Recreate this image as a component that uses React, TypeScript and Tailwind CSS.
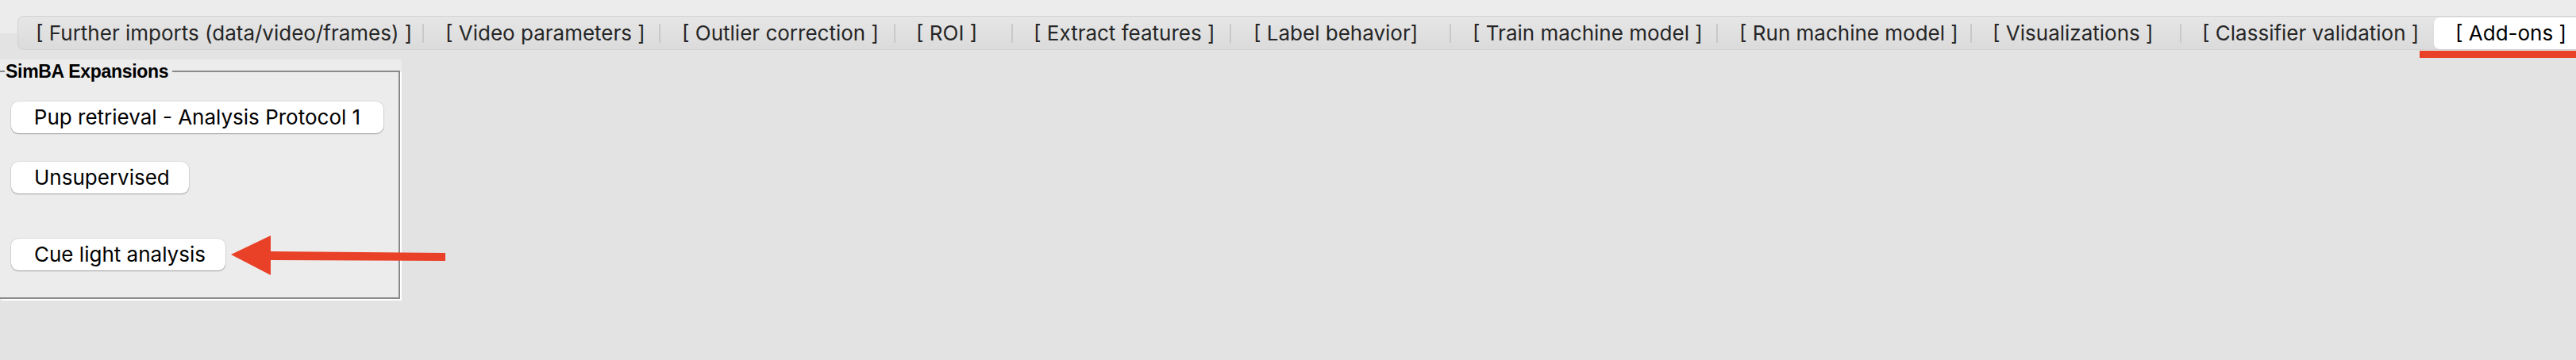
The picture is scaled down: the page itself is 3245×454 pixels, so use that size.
import React from "react";

const tabs: { label: string; cls: string }[] = [
  { label: "[ Further imports (data/video/frames) ]", cls: "w-[509px] pl-[22px]" },
  { label: "[ Video parameters ]", cls: "w-[296px] pl-[27px]" },
  { label: "[ Outlier correction ]", cls: "w-[294px] pl-[27px]" },
  { label: "[ ROI ]", cls: "w-[146px] pl-[26px]" },
  { label: "[ Extract features ]", cls: "w-[273px] pl-[26px]" },
  { label: "[ Label behavior]", cls: "w-[275px] pl-[28px]" },
  { label: "[ Train machine model ]", cls: "w-[334px] pl-[27px]" },
  { label: "[ Run machine model ]", cls: "w-[318px] pl-[27px]" },
  { label: "[ Visualizations ]", cls: "w-[262px] pl-[26px]" },
  { label: "[ Classifier validation ]", cls: "w-[318px] pl-[26px]" },
];

function MacButton({ label, cls }: { label: string; cls: string }) {
  return (
    <button
      className={
        "h-[40px] rounded-[9px] bg-white text-black text-[26px] leading-none flex items-center justify-center whitespace-nowrap shadow-[0_1px_1.5px_rgba(0,0,0,0.28),0_0_0_0.5px_rgba(0,0,0,0.12)] " +
        cls
      }
    >
      {label}
    </button>
  );
}

export default function App() {
  return (
    <div className="relative w-[3245px] h-[454px] overflow-hidden bg-[linear-gradient(to_bottom,#ececec_0px,#ececec_42px,#e3e3e3_42px,#e3e3e3_100%)] font-['Inter','Liberation_Sans',sans-serif]">
      {/* Tab bar */}
      <div className="pt-[20px] pl-[22px]">
        <div className="flex items-center w-[3300px] h-[43px] rounded-[8px] border border-[#d2d2d2] bg-[linear-gradient(to_bottom,#e6e6e6,#dbdbdb)] text-[26px] text-[#262626] leading-none">
          {tabs.map((t, i) => (
            <React.Fragment key={t.label}>
              <div className={"h-full flex items-center whitespace-nowrap shrink-0 " + t.cls}>{t.label}</div>
              {i < tabs.length - 1 && <div className="w-[2px] h-[24px] bg-[#c9c9c9] shrink-0" />}
            </React.Fragment>
          ))}
          <div className="h-[40px] w-[220px] pl-[27px] shrink-0 flex items-center bg-white rounded-[7px] text-black whitespace-nowrap shadow-[0_0_1px_rgba(0,0,0,0.15)]">
            [ Add-ons ]
          </div>
        </div>
      </div>

      {/* Labelframe */}
      <div className="relative mt-[12px] w-[506px] h-[304px] bg-[#ececec] pt-[14px]">
        <div className="w-[504px] h-[288px] border-t-2 border-r-2 border-b-2 border-[#8a8a8a] shadow-[2px_2px_0_#ffffff] flex flex-col items-start pl-[14px]">
          <MacButton label="Pup retrieval - Analysis Protocol 1" cls="w-[469px] mt-[37px]" />
          <MacButton label="Unsupervised" cls="w-[224px] mt-[36px] justify-start pl-[29px]" />
          <MacButton label="Cue light analysis" cls="w-[270px] mt-[57px] justify-start pl-[29px]" />
        </div>
        <div className="absolute left-[6px] top-[4px] pl-[1px] pr-[5px] bg-[#ececec] font-['Liberation_Sans',Arial,sans-serif] font-bold text-[23px] leading-[23px] tracking-[-0.3px] text-black">
          SimBA Expansions
        </div>
      </div>

      {/* Annotations */}
      <div className="absolute left-[3048px] top-[64px] w-[220px] h-[9px] bg-[#e94128]" />
      <svg className="absolute left-[288px] top-[290px]" width="280" height="64" viewBox="0 0 280 64">
        <polygon points="3,31 53,7 53,57" fill="#e94128" />
        <polygon points="52,27 273,29 273,39 52,38" fill="#e94128" />
      </svg>
    </div>
  );
}
